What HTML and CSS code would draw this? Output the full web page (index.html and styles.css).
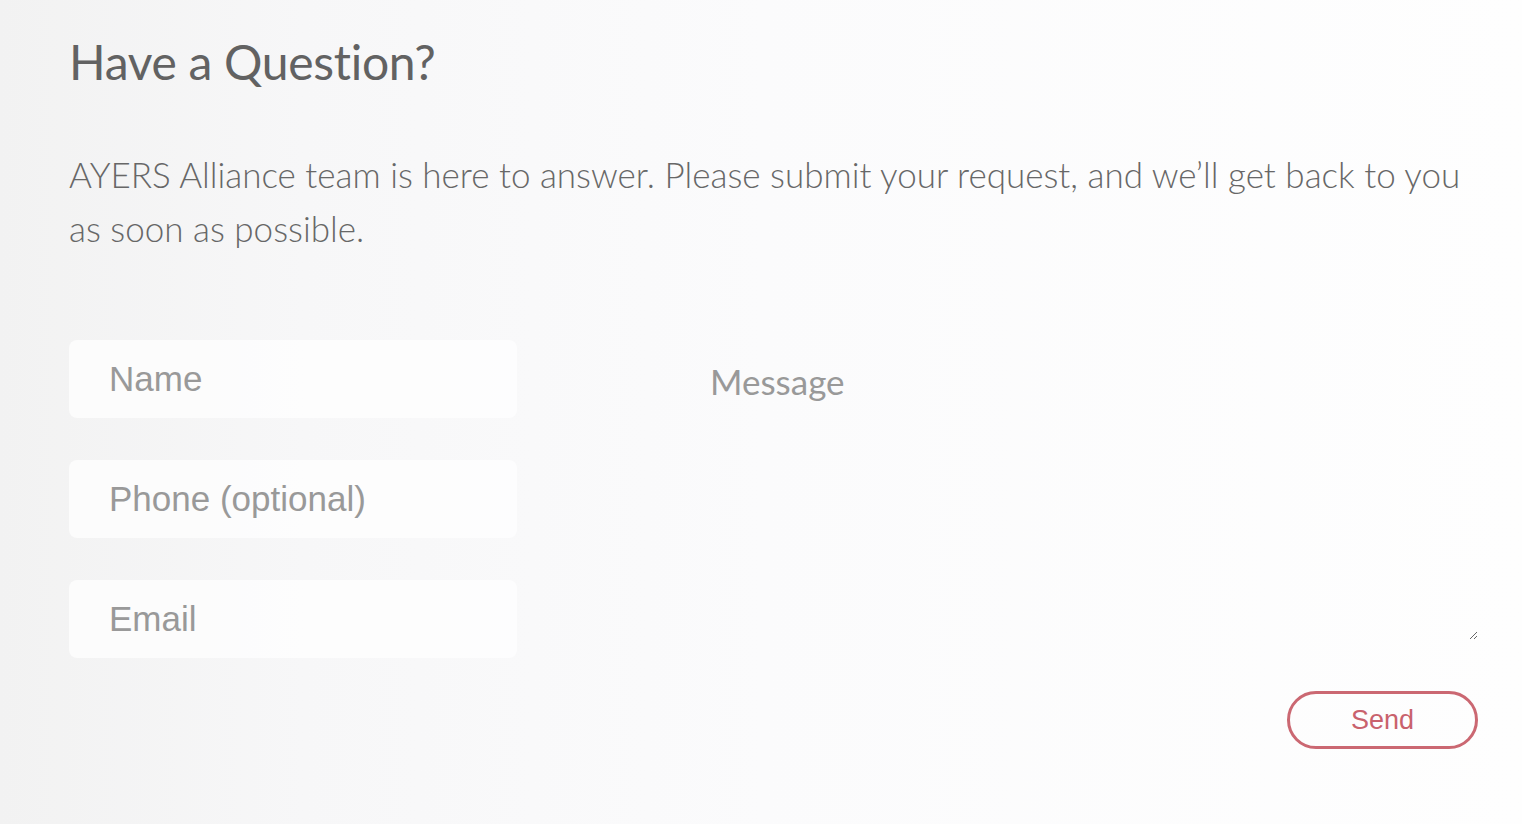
FILE: index.html
```html
<!DOCTYPE html>
<html lang="en">
<head>
<meta charset="utf-8">
<title>Have a Question?</title>
<link rel="stylesheet" href="styles.css">
</head>
<body>
<main class="contact">
  <h1 class="contact-title">Have a Question?</h1>
  <p class="contact-intro">AYERS Alliance team is here to answer. Please submit your request, and we’ll get back to you as soon as possible.</p>
  <form class="contact-form">
    <div class="fields">
      <input class="field" type="text" placeholder="Name">
      <input class="field" type="tel" placeholder="Phone (optional)">
      <input class="field" type="email" placeholder="Email">
    </div>
    <textarea class="message" placeholder="Message"></textarea>
    <div class="actions">
      <button class="send" type="button">Send</button>
    </div>
  </form>
</main>
</body>
</html>
```

FILE: styles.css
```css
html, body {
  margin: 0;
  height: 100%;
}
body {
  background: linear-gradient(90deg, #f2f2f2 0%, #f7f7f8 20%, #fbfbfc 50%, #fefefe 100%);
  font-family: Lato, "Liberation Sans", sans-serif;
  overflow: hidden;
}
.contact {
  padding: 32px 44px 0 69px;
}
.contact-title {
  margin: 0;
  font-family: Lato, sans-serif;
  font-weight: 400;
  font-size: 48px;
  line-height: 60px;
  color: #626262;
  letter-spacing: -0.3px;
}
.contact-intro {
  margin: 55px 0 0;
  font-family: Lato, sans-serif;
  font-weight: 300;
  font-size: 35px;
  line-height: 54px;
  color: #676767;
}
.contact-form {
  margin-top: 85px;
  display: grid;
  grid-template-columns: 448px 1fr;
  column-gap: 153px;
}
.fields {
  display: flex;
  flex-direction: column;
  gap: 42px;
}
.field {
  box-sizing: border-box;
  height: 78px;
  width: 100%;
  border: none;
  border-radius: 8px;
  background: rgba(255, 255, 255, 0.7);
  padding: 0 40px;
  font-family: "Liberation Sans", Arial, sans-serif;
  font-size: 35px;
  color: #555;
  outline: none;
}
.field::placeholder {
  color: #999;
}
.message {
  box-sizing: border-box;
  height: 300px;
  width: 100%;
  border: none;
  background: transparent;
  padding: 20px 40px;
  font-family: Lato, sans-serif;
  font-size: 35px;
  color: #555;
  outline: none;
  resize: vertical;
}
.message::placeholder {
  color: #999;
}
.actions {
  grid-column: 1 / -1;
  display: flex;
  justify-content: flex-end;
  margin-top: 33px;
}
.send {
  box-sizing: border-box;
  width: 191px;
  height: 58px;
  border: 3px solid #cb6872;
  border-radius: 29px;
  background: transparent;
  color: #c9626d;
  font-family: "Liberation Sans", Arial, sans-serif;
  font-size: 27px;
  cursor: pointer;
}
```
